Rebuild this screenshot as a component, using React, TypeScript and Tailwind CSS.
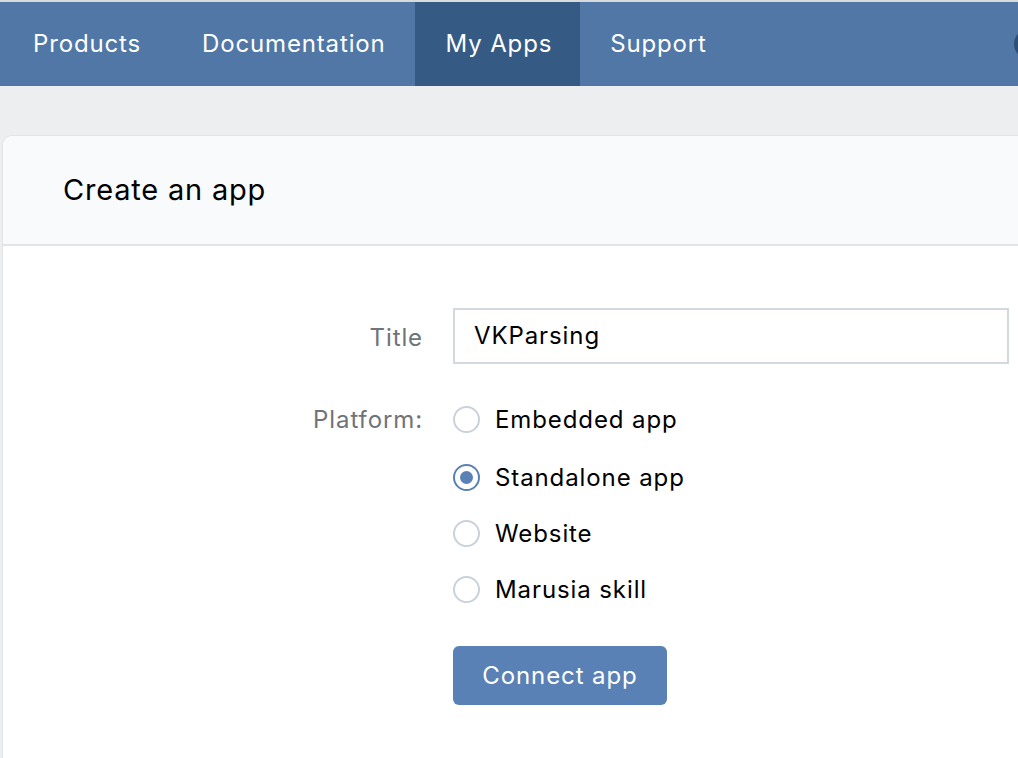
import React from "react";

const font = { fontFamily: "Inter, 'Noto Sans', sans-serif" };

function Radio({ checked, label, first }: { checked?: boolean; label: string; first?: boolean }) {
  return (
    <div className={first ? "flex h-[57px] items-start pt-[14px]" : "flex h-[56px] items-center"}>
      <div
        className={
          checked
            ? "flex h-[27px] w-[27px] items-center justify-center rounded-full border-2 border-[#5a81b5] bg-white"
            : "flex h-[27px] w-[27px] items-center justify-center rounded-full border-2 border-[#c9d1da] bg-white"
        }
      >
        {checked && <div className="h-[13px] w-[13px] rounded-full bg-[#5a81b5]" />}
      </div>
      <span className="ml-[15px] text-[24px] leading-[27px] tracking-[0.9px] text-black">{label}</span>
    </div>
  );
}

export default function App() {
  return (
    <div className="h-[758px] w-[1018px] overflow-hidden bg-[#edeef0]" style={font}>
      <div className="h-[2px] bg-[#d9dadc]" />
      <nav className="relative flex h-[84px] items-stretch overflow-hidden bg-[#5077a6] pl-[2px] text-[24px] tracking-[0.85px] text-white">
        <div className="flex items-center px-[31px]">Products</div>
        <div className="flex items-center pl-[30px] pr-[29px]">Documentation</div>
        <div className="flex items-center bg-[#355a84] pl-[31px] pr-[28px]">My Apps</div>
        <div className="flex items-center px-[30px]">Support</div>
        <div className="absolute left-[1014px] top-[27px] h-[30px] w-[30px] rounded-full bg-[#2f4f78]" />
      </nav>
      <div className="h-[49px]" />
      <div className="ml-[2px] h-[700px] rounded-tl-[10px] border-l border-t border-[#e3e4e8] bg-white">
        <div className="flex h-[110px] items-center rounded-tl-[10px] border-b-2 border-[#e3e4e8] bg-[#f9fafb] pl-[60px] text-[29px] tracking-[0.8px] text-black">
          Create an app
        </div>
        <div className="grid grid-cols-[420px_1fr] gap-x-[30px] pt-[62px]">
          <div className="flex h-[56px] items-center justify-end pt-[3px] text-[24px] tracking-[0.9px] text-[#707378]">Title</div>
          <div className="flex h-[56px] w-[556px] items-center border-2 border-[#d3d9de] bg-white pl-[19px] text-[24px] tracking-[0.9px] text-black">
            VKParsing
          </div>
          <div className="mt-[28px] flex h-[56px] items-center justify-end text-[24px] tracking-[0.9px] text-[#707378]">Platform:</div>
          <div className="mt-[28px] flex flex-col">
            <Radio first label="Embedded app" />
            <Radio checked label="Standalone app" />
            <Radio label="Website" />
            <Radio label="Marusia skill" />
            <button className="mt-[29px] flex h-[59px] w-[214px] items-center justify-center rounded-[6px] bg-[#5a81b5] text-[24px] tracking-[0.9px] text-white">
              Connect app
            </button>
          </div>
        </div>
      </div>
    </div>
  );
}
